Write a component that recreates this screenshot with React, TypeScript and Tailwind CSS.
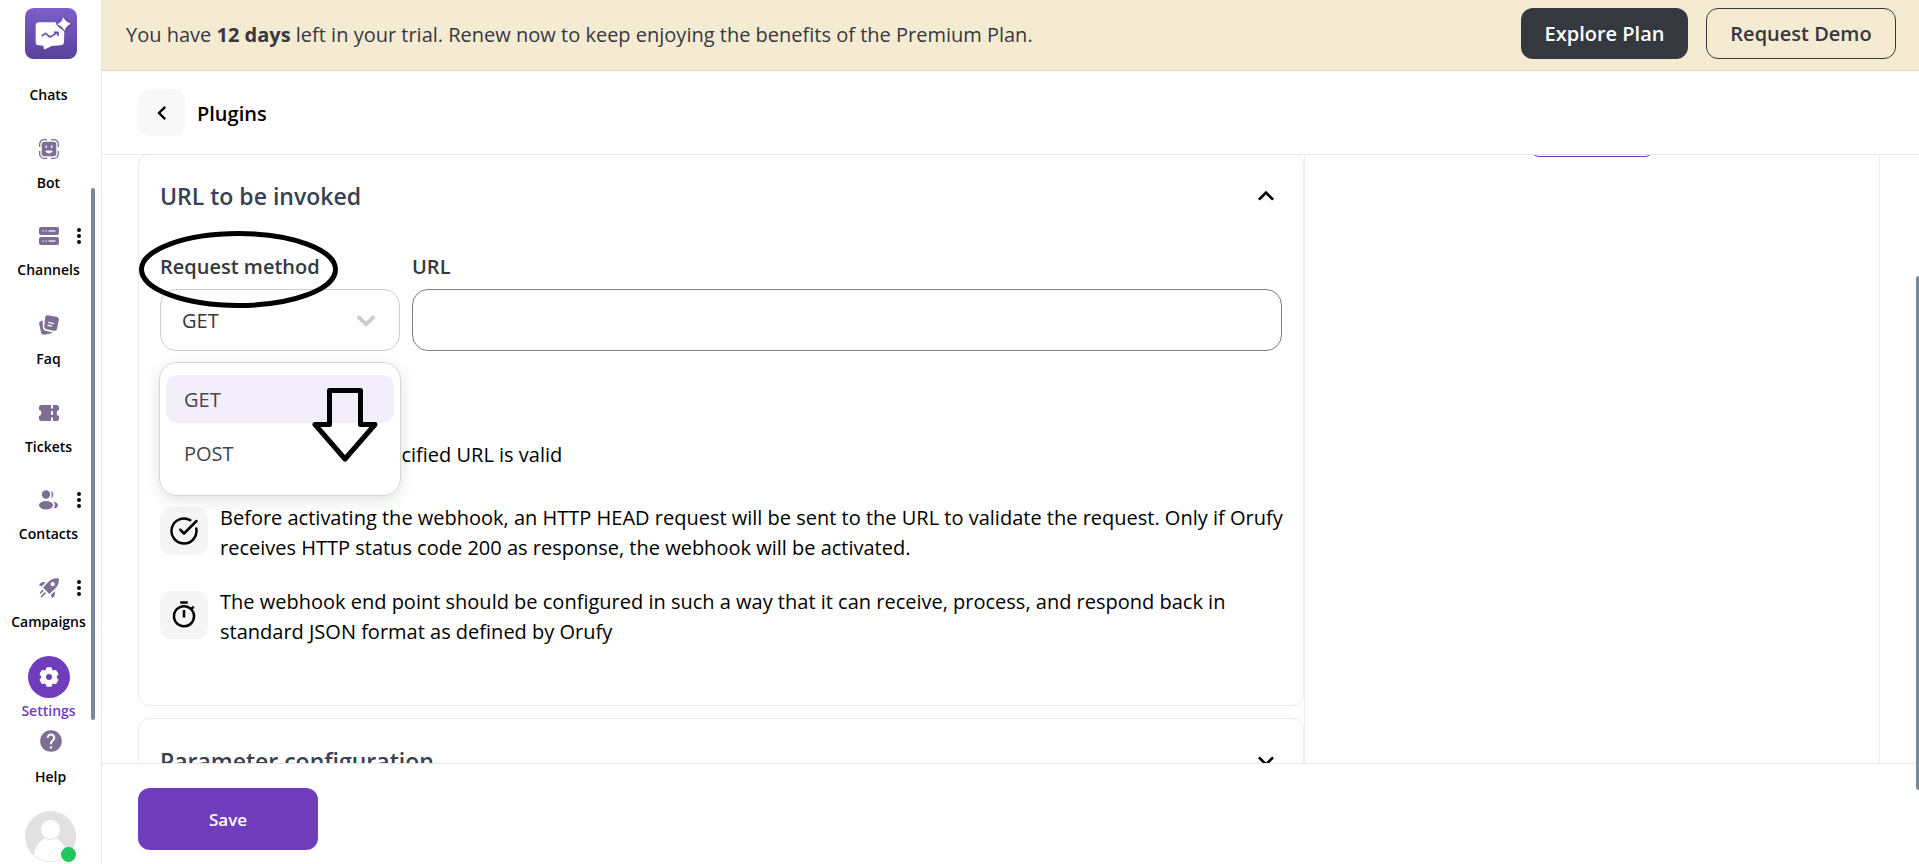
import { useState } from 'react';
import type { ReactNode } from 'react';
import { CircleCheckBig } from 'lucide-react';
import { MdChevronLeft, MdExpandLess, MdExpandMore, MdHelp, MdOutlineTimer } from 'react-icons/md';

const METHODS = ['GET', 'POST'];

function BotIcon() {
  return (
    <svg width="20" height="20" viewBox="0 0 20 20" fill="none">
      <path
        d="M.7 8V5A4.3 4.3 0 0 1 5 .7h3M12 .7h3A4.3 4.3 0 0 1 19.300 5v3M19.300 12v3a4.300 4.300 0 0 1-4.300 4.300h-3M8 19.300H5A4.300 4.300 0 0 1 .7 15v-3"
        stroke="#7c6f93"
        strokeWidth="1.300"
      />
      <rect x="2.700" y="2.700" width="14.600" height="14.600" rx="2.800" fill="#7c6f93" />
      <path d="M7.200 7v1.500M12.800 7v1.500" stroke="#fff" strokeWidth="1.300" strokeLinecap="round" />
      <path d="M6.800 12c.5 2.600 5.900 2.600 6.400 0z" fill="#fff" stroke="#fff" strokeWidth=".8" strokeLinejoin="round" />
    </svg>
  );
}

function ChannelsIcon() {
  return (
    <svg width="20" height="18" viewBox="0 0 20 18">
      <rect width="20" height="8" rx="2" fill="#7c6f93" />
      <rect y="10" width="20" height="8" rx="2" fill="#7c6f93" />
      <path d="M3.500 4h1.200M6.500 4h1.200M9.500 4h7M3.500 14h1.200M6.500 14h1.200M9.500 14h7" stroke="#e4dfee" strokeWidth="1.300" />
    </svg>
  );
}

function FaqIcon() {
  return (
    <svg width="20" height="20" viewBox="0 0 20 20">
      <path
        d="M3.800 5.600 1.900 6.200C.6 6.600-.1 7.500.2 9l1.900 8.600c.3 1.500 1.500 2.400 3 2.100l6.400-1.300c.8-.2 1.400-.6 1.800-1.200l-6-1.100c-2.300-.5-3.500-2-3.500-4.300z"
        fill="#7c6f93"
      />
      <path
        d="M8.800.2 17.300 1.700c1.900.4 2.900 1.700 2.500 3.500l-1.700 8.300c-.4 1.800-1.700 2.600-3.500 2.200L7.500 14.200c-1.700-.4-2.500-1.600-2.200-3.300L6.200 2.300C6.400.7 7.300-.1 8.800.2z"
        fill="#7c6f93"
      />
      <path d="m9.700 7.400 4.900 1.200M9 10.200l3.300.8" stroke="#fff" strokeWidth="1.300" strokeLinecap="round" />
    </svg>
  );
}

function TicketsIcon() {
  return (
    <svg width="20" height="16" viewBox="0 0 20 16">
      <path
        d="M2.500 0H12v3.500h2V0h3.500A2.500 2.500 0 0 1 20 2.500v2.300a3.300 3.300 0 0 0 0 6.400v2.300a2.500 2.500 0 0 1-2.500 2.500H14v-3.500h-2V16H2.500A2.500 2.500 0 0 1 0 13.500v-2.300a3.300 3.300 0 0 0 0-6.400V2.500A2.500 2.500 0 0 1 2.500 0zM12 6v4h2V6z"
        fillRule="evenodd"
        fill="#7c6f93"
      />
    </svg>
  );
}

function ContactsIcon() {
  return (
    <svg width="20" height="20" viewBox="0 0 20 20" fill="#7c6f93">
      <circle cx="7" cy="4.500" r="4.200" />
      <ellipse cx="7" cy="15.200" rx="7" ry="4.200" />
      <path d="M11.800.9a3.800 3.800 0 0 1 0 7.200c1.300-2.200 1.300-5 0-7.200zM14.600 11.800c2.500.4 4.400 1.700 4.400 3.400s-1.900 3-4.400 3.400c1.700-2 1.700-4.800 0-6.800z" />
    </svg>
  );
}

function CampaignsIcon() {
  return (
    <svg width="20" height="20" viewBox="0 0 20 20" fill="#7c6f93">
      <path
        d="M19.700.3C20.300 4.800 18.800 8 16 10.800l-5.600 5.100-6.300-6.300L9.200 4C12 1.200 15.200-.2 19.700.3zM13.700 4.100a2.100 2.100 0 1 0 0 4.200 2.100 2.100 0 0 0 0-4.200z"
        fillRule="evenodd"
      />
      <path d="M6.800 4.100 3 8.200 0 7.400c.6-2 3-3.900 6.800-3.300zM15.900 13.200c.6 3.800-.9 5.900-2.800 6.800l-1.300-3z" />
      <path d="m3.300 11.500 1.300 1.300-3 3.200-.9-.9zM5.800 14l1.200 1.200-4.400 4.200-1.100-1z" />
    </svg>
  );
}

function SettingsIcon() {
  return (
    <span className="flex size-[42px] items-center justify-center rounded-full bg-[#6f3dbb]">
      <svg width="20" height="20" viewBox="0 0 20 20">
        <path
          d="M8.200.6h3.600l.9 2.500 1.300.7 2.600-.5 1.800 3.100-1.700 2.100v1.500l1.700 2.100-1.800 3.100-2.600-.5-1.300.8-.9 2.500H8.200l-.9-2.500-1.300-.8-2.600.5-1.800-3.100L3.300 10V8.500L1.600 6.400l1.800-3.100 2.600.5 1.300-.7z"
          transform="translate(0 .7)"
          fill="#fff"
          stroke="#fff"
          strokeWidth="2"
          strokeLinejoin="round"
        />
        <circle cx="10" cy="10" r="3" fill="#6f3dbb" />
      </svg>
    </span>
  );
}

function Logo() {
  return (
    <svg width="52" height="51" viewBox="0 0 156 153" className="shrink-0">
      <defs>
        <linearGradient id="logo-bg" x1="0" y1="0" x2="0" y2="1">
          <stop offset="0" stopColor="#7b61c9" />
          <stop offset="1" stopColor="#57419b" />
        </linearGradient>
      </defs>
      <rect width="156" height="153" rx="26" fill="url(#logo-bg)" />
      <path
        d="M42 43h50c2 9 10 20 26 23l-1 36c0 6-4 10-10 10l-27 2-18 9c-4 2-6 0-6-4l-1-6-14-1c-6 0-9-4-9-10V54c0-7 3-11 10-11z"
        fill="#fff"
      />
      <path d="M117 26 140 48 118 71 95 48z" fill="#5f49a8" />
      <path d="M115 29c5 9 11 14 21 18-9 5-14 10-18 20-4-9-10-14-20-18 9-5 14-10 17-20z" fill="#fff" stroke="#fff" strokeWidth="2" strokeLinejoin="round" />
      <path d="m50 84 11-8 14 11 9-5 14-9M87 73h12v11" fill="none" stroke="#6a52b3" strokeWidth="5" strokeLinejoin="round" />
    </svg>
  );
}

function Avatar() {
  return (
    <div className="relative size-[51px]">
      <svg width="51" height="51" viewBox="0 0 51 51">
        <circle cx="25.500" cy="25.500" r="25.500" fill="#e1e1e1" />
        <circle cx="25.500" cy="18.500" r="9.500" fill="#fff" />
        <path d="M9 44c1-8 4.500-13 11-17a9.500 9.500 0 0 0 11 0c6.500 4 10 9 11 17a25 25 0 0 1-33 0z" fill="#fff" />
      </svg>
      <span className="absolute right-0 bottom-0 size-[15px] rounded-full bg-[#22c55e]" />
    </div>
  );
}

const navItems: { label: string; icon: ReactNode; menu?: boolean; active?: boolean }[] = [
  { label: 'Bot', icon: <BotIcon /> },
  { label: 'Channels', icon: <ChannelsIcon />, menu: true },
  { label: 'Faq', icon: <FaqIcon /> },
  { label: 'Tickets', icon: <TicketsIcon /> },
  { label: 'Contacts', icon: <ContactsIcon />, menu: true },
  { label: 'Campaigns', icon: <CampaignsIcon />, menu: true },
  { label: 'Settings', icon: <SettingsIcon />, active: true },
];

function Sidebar() {
  return (
    <aside className="relative flex w-[102px] shrink-0 flex-col items-center border-r border-[#e8e8e8] pt-2 text-sm leading-5 font-semibold">
      <Logo />
      <nav className="mt-[26px] w-full pr-1">
        <a href="#chats" className="block text-center">Chats</a>
        {navItems.map((item) => (
          <div key={item.label} className={item.menu ? 'relative flex h-22 flex-col justify-end pb-px' : 'relative flex h-22 flex-col justify-end'}>
            <a href={'#' + item.label.toLowerCase()} className="flex flex-col items-center gap-[3px]">
              <span className="flex h-[42px] items-center">{item.icon}</span>
              <span className={item.active ? 'text-[#6f3dbb]' : ''}>{item.label}</span>
            </a>
            {item.menu && (
              <button aria-label={item.label + ' menu'} className="absolute top-[35px] right-4">
                <svg width="4" height="16" viewBox="0 0 4 16">
                  <circle cx="2" cy="2" r="2" />
                  <circle cx="2" cy="8" r="2" />
                  <circle cx="2" cy="14" r="2" />
                </svg>
              </button>
            )}
          </div>
        ))}
      </nav>
      <a href="#help" className="mt-[7px] flex flex-col items-center gap-[13px]">
        <MdHelp size={26} color="#7c6f93" />
        Help
      </a>
      <div className="mt-6">
        <Avatar />
      </div>
      {/* scroll thumb */}
      <div className="absolute top-[188px] right-1.5 h-[532px] w-1 rounded-full bg-[#778899]" />
    </aside>
  );
}

function RequestMethod() {
  const [method, setMethod] = useState('GET');

  return (
    <div className="relative w-60 shrink-0">
      <label htmlFor="method" className="block leading-7 font-semibold text-[#363840]">Request method</label>
      <div className="relative mt-2">
        <select
          id="method"
          value={method}
          onChange={(e) => setMethod(e.target.value)}
          className="block h-[62px] w-full appearance-none rounded-2xl border border-[#cccccc] bg-white px-[21px] pt-0.5 text-[#363840]"
        >
          {METHODS.map((m) => (
            <option key={m}>{m}</option>
          ))}
        </select>
        <svg
          width="30"
          height="30"
          viewBox="0 0 20 20"
          fill="#cccccc"
          stroke="#cccccc"
          strokeWidth=".4"
          className="pointer-events-none absolute top-4 right-[19px]"
        >
          <path d="M4.516 7.548c0.436-0.446 1.043-0.481 1.576 0l3.908 3.747 3.908-3.747c0.533-0.481 1.141-0.446 1.574 0 0.436 0.445 0.408 1.197 0 1.615-0.406 0.418-4.695 4.502-4.695 4.502-0.217 0.223-0.502 0.335-0.787 0.335s-0.570-0.112-0.789-0.335c0 0-4.287-4.084-4.695-4.502s-0.436-1.170 0-1.615z" />
        </svg>

        {/* Open menu */}
        <div className="absolute -inset-x-px top-full z-10 mt-[11px] rounded-[18px] border border-[#d6d6d6] bg-white px-1.5 pt-3 pb-[18px] shadow-[0_4px_16px_rgba(0,0,0,0.12)]">
          <div role="listbox" aria-label="Request method" className="flex flex-col gap-1.5">
            {METHODS.map((m) => (
              <button
                key={m}
                role="option"
                aria-selected={m === method}
                onClick={() => setMethod(m)}
                className={m === method
                  ? 'h-12 rounded-xl bg-[#f3effa] px-[18px] pt-0.5 text-left text-[#44464f]'
                  : 'h-12 rounded-xl px-[18px] pt-0.5 text-left text-[#44464f]'}
              >
                {m}
              </button>
            ))}
          </div>
          <svg width="66" height="74" viewBox="0 0 66 74" className="absolute top-[25px] left-[152px]" fill="none" stroke="#000" strokeWidth="5">
            <path d="M17.500 2.500h31v34H63L33 71 3 36.500h14.500z" strokeLinejoin="round" />
          </svg>
        </div>
      </div>

      <svg width="199" height="77" viewBox="0 0 199 77" className="pointer-events-none absolute -top-[22px] -left-[21px] z-20" fill="none">
        <ellipse cx="99.500" cy="38.500" rx="97" ry="36" stroke="#000" strokeWidth="5" />
      </svg>
    </div>
  );
}

function Note({ icon, children }: { icon: ReactNode; children: ReactNode }) {
  return (
    <li className="flex items-start gap-3 leading-[30px]">
      <span className="mt-1 -mb-1 flex size-12 shrink-0 items-center justify-center rounded-xl bg-[#f5f5f5]">{icon}</span>
      <span className="self-center">{children}</span>
    </li>
  );
}

function App() {
  return (
    <div className="flex h-screen overflow-hidden bg-white font-['Open_Sans','Noto_Sans',sans-serif] text-[20px] text-black">
      <Sidebar />

      <div className="relative flex min-w-0 flex-1 flex-col">
        {/* Trial banner */}
        <div className="flex h-[71px] shrink-0 items-center justify-between border-b border-[#e3d9bf] bg-[#f5ebd3] pr-[23px] pb-1 pl-6 text-[#363840]">
          <p className="pt-1">
            You have <b>12 days</b> left in your trial. Renew now to keep enjoying the benefits of the Premium Plan.
          </p>
          <div className="flex gap-[18px] font-semibold">
            <button className="h-[51px] w-[167px] rounded-xl bg-[#363840] pt-0.5 text-white">Explore Plan</button>
            <button className="h-[51px] w-[190px] rounded-xl border border-[#363840] pt-0.5">Request Demo</button>
          </div>
        </div>

        {/* Header */}
        <header className="flex h-21 shrink-0 items-center gap-3 border-b border-[#e8e8e8] pl-9">
          <button aria-label="Back" className="flex size-[47px] items-center justify-center rounded-xl bg-[#f8f8f8]">
            <MdChevronLeft size={28} />
          </button>
          <h1 className="pt-0.5 font-semibold">Plugins</h1>
        </header>

        {/* Content */}
        <main className="flex min-h-0 flex-1 overflow-hidden pr-[39px] pl-9">
          <div className="-mt-0.5 min-w-0 flex-1">
            <section className="rounded-xl border border-[#ebebeb] px-[21px] pt-[26px] pb-[58px]">
              <div className="flex items-center justify-between">
                <h2 className="text-[23px] leading-8 font-semibold text-[#374151]">URL to be invoked</h2>
                <button aria-label="Collapse">
                  <MdExpandLess size={32} />
                </button>
              </div>
              <div className="mt-[41px] flex gap-3">
                <RequestMethod />
                <div className="min-w-0 flex-1">
                  <label htmlFor="url" className="block leading-7 font-semibold text-[#363840]">URL</label>
                  <input id="url" type="text" className="mt-2 block h-[62px] w-full rounded-2xl border border-[#808080] px-5" />
                </div>
              </div>
              <ul className="mt-20 -mr-3 flex flex-col gap-6">
                <Note icon={<CircleCheckBig size={30} />}>Ensure that the specified URL is valid</Note>
                <Note icon={<CircleCheckBig size={30} />}>
                  Before activating the webhook, an HTTP HEAD request will be sent to the URL to validate the request. Only if Orufy receives HTTP status code 200 as response, the webhook will be activated.
                </Note>
                <Note icon={<MdOutlineTimer size={30} />}>
                  The webhook end point should be configured in such a way that it can receive, process, and respond back in standard JSON format as defined by Orufy
                </Note>
              </ul>
            </section>

            <section className="mt-3 rounded-xl border border-[#ebebeb] px-[21px] py-[26px]">
              <div className="flex items-center justify-between">
                <h2 className="text-[23px] leading-8 font-semibold text-[#374151]">Parameter configuration</h2>
                <button aria-label="Expand">
                  <MdExpandMore size={32} />
                </button>
              </div>
            </section>
          </div>

          {/* Preview column, scrolled past its button */}
          <div className="w-[576px] shrink-0 border-x border-[#ebebeb]">
            <button aria-label="Preview" className="mx-auto -mt-12 block h-[50px] w-[122px] rounded-lg border border-[#6f3dbb]" />
          </div>
        </main>

        {/* Footer */}
        <footer className="h-[101px] shrink-0 border-t border-[#e8e8e8] pt-6 pl-9">
          <button className="h-[62px] w-[180px] rounded-xl bg-[#6f3dbb] pt-0.5 text-[17px] font-semibold text-white">Save</button>
        </footer>

        {/* scroll thumb */}
        <div className="absolute top-[276px] right-0 h-[514px] w-[3px] rounded-l-full bg-[#778899]" />
      </div>
    </div>
  );
}

export default App;
